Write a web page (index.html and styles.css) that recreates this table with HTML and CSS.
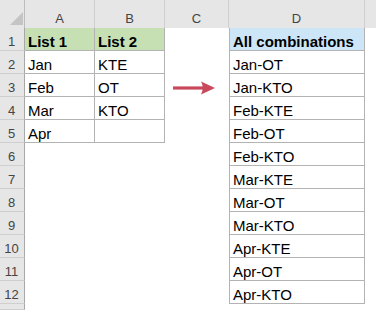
FILE: index.html
```html
<!DOCTYPE html>
<html>
<head>
<meta charset="utf-8">
<link rel="stylesheet" href="styles.css">
</head>
<body>
<div class="sheet">
  <div class="row head">
    <div class="corner"><svg width="25" height="28" viewBox="0 0 25 28"><polygon points="23,12 23,25 10,25" fill="#c4c4c4"/></svg></div>
    <div class="ch">A</div><div class="ch">B</div><div class="ch">C</div><div class="ch">D</div><div class="ch end"></div>
  </div>
  <div class="row">
    <div class="rh">1</div>
    <div class="c t green b">List 1</div><div class="c t green b">List 2</div><div class="c"></div><div class="c t d blue b">All combinations</div><div class="c"></div>
  </div>
  <div class="row">
    <div class="rh">2</div>
    <div class="c t">Jan</div><div class="c t">KTE</div><div class="c"></div><div class="c t d">Jan-OT</div><div class="c"></div>
  </div>
  <div class="row">
    <div class="rh">3</div>
    <div class="c t">Feb</div><div class="c t">OT</div>
    <div class="c arrow-cell"><svg class="arrow" width="44" height="16" viewBox="0 0 44 16"><path d="M0 6.4 L31 6.4 L31 9.6 L0 9.6 Z" fill="#c9485c"/><path d="M42 8 L28 1.5 Q31.5 8 28 14.5 Z" fill="#c9485c"/></svg></div>
    <div class="c t d">Jan-KTO</div><div class="c"></div>
  </div>
  <div class="row">
    <div class="rh">4</div>
    <div class="c t">Mar</div><div class="c t">KTO</div><div class="c"></div><div class="c t d">Feb-KTE</div><div class="c"></div>
  </div>
  <div class="row">
    <div class="rh">5</div>
    <div class="c t">Apr</div><div class="c t"></div><div class="c"></div><div class="c t d">Feb-OT</div><div class="c"></div>
  </div>
  <div class="row">
    <div class="rh">6</div>
    <div class="c"></div><div class="c"></div><div class="c"></div><div class="c t d">Feb-KTO</div><div class="c"></div>
  </div>
  <div class="row">
    <div class="rh">7</div>
    <div class="c"></div><div class="c"></div><div class="c"></div><div class="c t d">Mar-KTE</div><div class="c"></div>
  </div>
  <div class="row">
    <div class="rh">8</div>
    <div class="c"></div><div class="c"></div><div class="c"></div><div class="c t d">Mar-OT</div><div class="c"></div>
  </div>
  <div class="row">
    <div class="rh">9</div>
    <div class="c"></div><div class="c"></div><div class="c"></div><div class="c t d">Mar-KTO</div><div class="c"></div>
  </div>
  <div class="row">
    <div class="rh">10</div>
    <div class="c"></div><div class="c"></div><div class="c"></div><div class="c t d">Apr-KTE</div><div class="c"></div>
  </div>
  <div class="row">
    <div class="rh">11</div>
    <div class="c"></div><div class="c"></div><div class="c"></div><div class="c t d">Apr-OT</div><div class="c"></div>
  </div>
  <div class="row">
    <div class="rh">12</div>
    <div class="c"></div><div class="c"></div><div class="c"></div><div class="c t d">Apr-KTO</div><div class="c"></div>
  </div>
  <div class="row tail">
    <div class="rh"></div>
    <div class="c"></div><div class="c"></div><div class="c"></div><div class="c"></div><div class="c"></div>
  </div>
</div>
</body>
</html>
```

FILE: styles.css
```css
* { box-sizing: border-box; }
html, body {
  margin: 0;
  padding: 0;
  background: #ffffff;
  overflow: hidden;
  width: 376px;
  height: 310px;
}
.sheet {
  display: flex;
  flex-direction: column;
  font-family: "Liberation Sans", Arial, sans-serif;
}
.row {
  display: grid;
  grid-template-columns: 25px 70px 70px 64px 136px 1fr;
  height: 23px;
}
.row.head {
  height: 28px;
}
.row.tail {
  height: 6px;
}
.corner {
  background: #e6e6e6;
  border-right: 1px solid #bcbcbc;
  border-bottom: 1px solid #a8a8a8;
}
.corner svg { display: block; }
.ch {
  background: #e6e6e6;
  border-right: 1px solid #cfcfcf;
  border-bottom: 1px solid #a8a8a8;
  color: #444444;
  font-size: 13px;
  display: flex;
  align-items: center;
  justify-content: center;
  padding-top: 8px;
}
.ch.end { border-right: none; }
.rh {
  background: #e6e6e6;
  border-right: 1px solid #a8a8a8;
  border-bottom: 1px solid #cfcfcf;
  color: #444444;
  font-size: 13px;
  display: flex;
  align-items: center;
  justify-content: center;
  padding-right: 1px;
  padding-top: 5px;
}
.c {
  background: #ffffff;
  font-size: 15px;
  color: #000000;
  display: flex;
  align-items: center;
  padding-left: 3px;
  padding-top: 4px;
  white-space: nowrap;
}
.c.t {
  border-right: 1px solid #b3b3b3;
  border-bottom: 1px solid #b3b3b3;
}
.c.d {
  border-left: 1px solid #b3b3b3;
}
.green { background: #c6e0b4; }
.blue { background: #cde6f7; }
.b { font-weight: bold; }
.arrow-cell {
  padding-left: 8px;
  padding-top: 4px;
  overflow: visible;
}
.arrow { display: block; }
```
